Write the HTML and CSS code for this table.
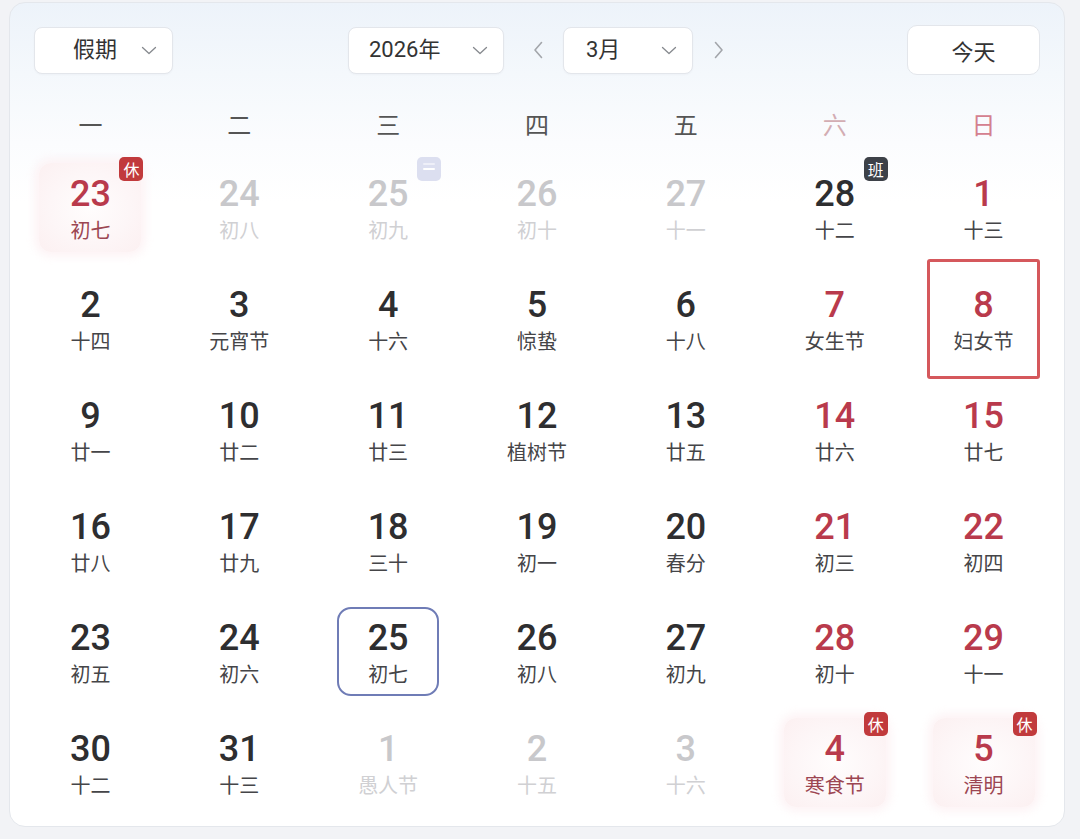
FILE: index.html
```html
<!DOCTYPE html>
<html lang="zh-CN">
<head>
<meta charset="utf-8">
<title>日历</title>
<link rel="stylesheet" href="styles.css">
</head>
<body>
<div class="card">
  <div class="header">
    <div class="left">
      <div class="select sel-holiday"><span>假期</span><svg class="chev" width="16" height="9" viewBox="0 0 16 9"><path d="M1.5 1.5l6.5 6 6.5-6" /></svg></div>
    </div>
    <div class="center">
      <div class="select sel-year"><span>2026年</span><svg class="chev" width="16" height="9" viewBox="0 0 16 9"><path d="M1.5 1.5l6.5 6 6.5-6" /></svg></div>
      <div class="nav nav-prev"><svg width="10" height="18" viewBox="0 0 10 18"><path d="M8.5 1.5L2 9l6.5 7.5" /></svg></div>
      <div class="select sel-month"><span>3月</span><svg class="chev" width="16" height="9" viewBox="0 0 16 9"><path d="M1.5 1.5l6.5 6 6.5-6" /></svg></div>
      <div class="nav nav-next"><svg width="10" height="18" viewBox="0 0 10 18"><path d="M1.5 1.5L8 9l-6.5 7.5" /></svg></div>
    </div>
    <div class="right">
      <div class="btn-today">今天</div>
    </div>
  </div>

  <div class="weekdays">
    <div>一</div><div>二</div><div>三</div><div>四</div><div>五</div><div class="sat">六</div><div class="sun">日</div>
  </div>

  <div class="grid">
    <!-- row 1 -->
    <div class="cell"><div class="day holiday red"><span class="num">23</span><span class="lunar">初七</span><span class="badge rest">休</span></div></div>
    <div class="cell"><div class="day faded"><span class="num">24</span><span class="lunar">初八</span></div></div>
    <div class="cell"><div class="day faded"><span class="num">25</span><span class="lunar">初九</span><span class="badge mark"><i></i></span></div></div>
    <div class="cell"><div class="day faded"><span class="num">26</span><span class="lunar">初十</span></div></div>
    <div class="cell"><div class="day faded"><span class="num">27</span><span class="lunar">十一</span></div></div>
    <div class="cell"><div class="day"><span class="num">28</span><span class="lunar">十二</span><span class="badge work">班</span></div></div>
    <div class="cell"><div class="day wknd"><span class="num">1</span><span class="lunar">十三</span></div></div>
    <!-- row 2 -->
    <div class="cell"><div class="day"><span class="num">2</span><span class="lunar">十四</span></div></div>
    <div class="cell"><div class="day"><span class="num">3</span><span class="lunar">元宵节</span></div></div>
    <div class="cell"><div class="day"><span class="num">4</span><span class="lunar">十六</span></div></div>
    <div class="cell"><div class="day"><span class="num">5</span><span class="lunar">惊蛰</span></div></div>
    <div class="cell"><div class="day"><span class="num">6</span><span class="lunar">十八</span></div></div>
    <div class="cell"><div class="day wknd"><span class="num">7</span><span class="lunar">女生节</span></div></div>
    <div class="cell"><div class="day wknd selected"><span class="num">8</span><span class="lunar">妇女节</span></div></div>
    <!-- row 3 -->
    <div class="cell"><div class="day"><span class="num">9</span><span class="lunar">廿一</span></div></div>
    <div class="cell"><div class="day"><span class="num">10</span><span class="lunar">廿二</span></div></div>
    <div class="cell"><div class="day"><span class="num">11</span><span class="lunar">廿三</span></div></div>
    <div class="cell"><div class="day"><span class="num">12</span><span class="lunar">植树节</span></div></div>
    <div class="cell"><div class="day"><span class="num">13</span><span class="lunar">廿五</span></div></div>
    <div class="cell"><div class="day wknd"><span class="num">14</span><span class="lunar">廿六</span></div></div>
    <div class="cell"><div class="day wknd"><span class="num">15</span><span class="lunar">廿七</span></div></div>
    <!-- row 4 -->
    <div class="cell"><div class="day"><span class="num">16</span><span class="lunar">廿八</span></div></div>
    <div class="cell"><div class="day"><span class="num">17</span><span class="lunar">廿九</span></div></div>
    <div class="cell"><div class="day"><span class="num">18</span><span class="lunar">三十</span></div></div>
    <div class="cell"><div class="day"><span class="num">19</span><span class="lunar">初一</span></div></div>
    <div class="cell"><div class="day"><span class="num">20</span><span class="lunar">春分</span></div></div>
    <div class="cell"><div class="day wknd"><span class="num">21</span><span class="lunar">初三</span></div></div>
    <div class="cell"><div class="day wknd"><span class="num">22</span><span class="lunar">初四</span></div></div>
    <!-- row 5 -->
    <div class="cell"><div class="day"><span class="num">23</span><span class="lunar">初五</span></div></div>
    <div class="cell"><div class="day"><span class="num">24</span><span class="lunar">初六</span></div></div>
    <div class="cell"><div class="day today"><span class="num">25</span><span class="lunar">初七</span></div></div>
    <div class="cell"><div class="day"><span class="num">26</span><span class="lunar">初八</span></div></div>
    <div class="cell"><div class="day"><span class="num">27</span><span class="lunar">初九</span></div></div>
    <div class="cell"><div class="day wknd"><span class="num">28</span><span class="lunar">初十</span></div></div>
    <div class="cell"><div class="day wknd"><span class="num">29</span><span class="lunar">十一</span></div></div>
    <!-- row 6 -->
    <div class="cell"><div class="day"><span class="num">30</span><span class="lunar">十二</span></div></div>
    <div class="cell"><div class="day"><span class="num">31</span><span class="lunar">十三</span></div></div>
    <div class="cell"><div class="day faded"><span class="num">1</span><span class="lunar">愚人节</span></div></div>
    <div class="cell"><div class="day faded"><span class="num">2</span><span class="lunar">十五</span></div></div>
    <div class="cell"><div class="day faded"><span class="num">3</span><span class="lunar">十六</span></div></div>
    <div class="cell"><div class="day holiday red"><span class="num">4</span><span class="lunar">寒食节</span><span class="badge rest">休</span></div></div>
    <div class="cell"><div class="day holiday red"><span class="num">5</span><span class="lunar">清明</span><span class="badge rest">休</span></div></div>
  </div>
</div>
</body>
</html>
```

FILE: styles.css
```css
* { box-sizing: border-box; }

html, body {
  margin: 0;
  padding: 0;
  background: #f2f3f6;
}

body {
  font-family: Roboto, "Noto Sans CJK SC", sans-serif;
  color: #333;
  width: 1080px;
  height: 839px;
  overflow: hidden;
}

.card {
  margin: 2px 0 0 9px;
  width: 1056px;
  height: 825px;
  border: 1px solid #e4e7ec;
  border-radius: 16px;
  background: linear-gradient(180deg, #edf3fa 0px, #f4f8fc 70px, #fbfcfe 140px, #ffffff 200px);
  padding: 0 6px;
}

/* header */
.header {
  display: grid;
  grid-template-columns: 1fr auto 1fr;
  align-items: center;
  height: 50px;
  margin: 22px 18px 0 18px;
}

.left { display: flex; justify-content: flex-start; }
.right { display: flex; justify-content: flex-end; }
.center { display: flex; align-items: center; margin-left: 5px; }

.select {
  height: 47px;
  display: flex;
  align-items: center;
  justify-content: space-between;
  background: #fff;
  border: 1px solid #e3e6eb;
  border-radius: 8px;
  font-size: 22px;
  color: #333;
  padding-right: 15px;
  box-shadow: 0 1px 2px rgba(30, 40, 60, 0.03);
}

.select span { line-height: 1; }

.chev path, .nav path {
  fill: none;
  stroke: #86898e;
  stroke-width: 1.3;
  stroke-linecap: round;
  stroke-linejoin: round;
}

.nav path { stroke: #a3a6ab; stroke-width: 1.6; }

.sel-holiday { width: 139px; padding-left: 38px; }
.sel-year { width: 156px; padding-left: 20px; }
.sel-month { width: 130px; padding-left: 22px; }

.nav {
  width: 24px;
  height: 24px;
  display: flex;
  align-items: center;
  justify-content: center;
}
.nav-prev { margin: 0 13px 0 22px; }
.nav-next { margin-left: 14px; }

.btn-today {
  width: 133px;
  height: 50px;
  display: flex;
  align-items: center;
  justify-content: center;
  background: #fff;
  border: 1px solid #e3e6eb;
  border-radius: 10px;
  font-size: 22px;
  color: #333;
}

/* weekdays */
.weekdays {
  display: grid;
  grid-template-columns: repeat(7, 1fr);
  height: 36px;
  margin-top: 30px;
  align-items: center;
  text-align: center;
  font-size: 24px;
  color: #555;
  font-family: "Noto Sans CJK SC", sans-serif;
}
.weekdays .sat { color: #d3adb3; }
.weekdays .sun { color: #d4808f; }

/* grid */
.grid {
  display: grid;
  grid-template-columns: repeat(7, 1fr);
  grid-auto-rows: 111px;
  margin-top: 14px;
}

.cell {
  display: flex;
  align-items: center;
  justify-content: center;
  padding-bottom: 6px;
}

.day {
  position: relative;
  width: 102px;
  height: 89px;
  display: flex;
  flex-direction: column;
  align-items: center;
  justify-content: center;
  gap: 4px;
  border-radius: 12px;
}

.num {
  font-family: Roboto, sans-serif;
  font-size: 36px;
  font-weight: 500;
  line-height: 40px;
  color: #2e2e30;
}

.lunar {
  font-family: "Noto Sans CJK SC", sans-serif;
  font-size: 20px;
  line-height: 24px;
  color: #454548;
}

.wknd .num, .red .num { color: #b93a4c; }
.red .lunar { color: #9c4652; }

.faded .num { color: #c8c8cb; }
.faded .lunar { color: #d0d0d3; }

.holiday {
  background: radial-gradient(ellipse at 50% 50%, #fffdfd 0%, #fdf6f7 55%, #fcf0f1 100%);
  box-shadow: 0 0 10px 4px rgba(252, 238, 240, 0.75);
}

.today {
  border: 2px solid #6f7cb6;
  border-radius: 14px;
}

.selected::after {
  content: "";
  position: absolute;
  top: -15px;
  bottom: -16px;
  left: -6px;
  right: -5px;
  border: 3px solid #d5585c;
  border-radius: 3px;
}

.badge {
  position: absolute;
  top: -6px;
  right: -2px;
  width: 24px;
  height: 24px;
  border-radius: 5px;
  display: flex;
  align-items: center;
  justify-content: center;
  font-family: "Noto Sans CJK SC", sans-serif;
  font-size: 16px;
  line-height: 1;
  color: #fff;
}

.badge.rest { background: #c13a3c; }
.badge.work { background: #3d4148; }
.badge.mark { background: #dcdff0; }
.badge.mark i {
  display: block;
  width: 12px;
  height: 2px;
  background: #fff;
  border-radius: 1px;
  box-shadow: 0 -5px 0 0 rgba(255,255,255,0.5);
}
```
